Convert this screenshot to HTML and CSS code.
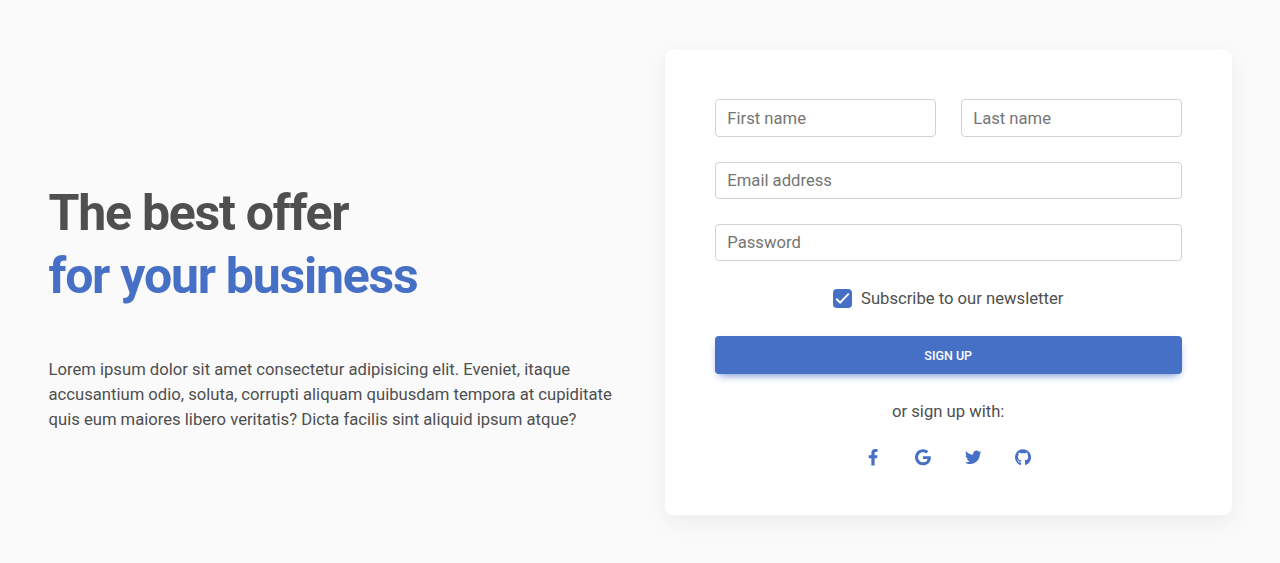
FILE: index.html
```html
<!DOCTYPE html>
<html lang="en">
<head>
<meta charset="utf-8">
<title>Sign up</title>
<link rel="stylesheet" href="styles.css">
</head>
<body>
<section class="hero">
  <div class="intro">
    <h1 class="title">The best offer<br><span class="accent">for your business</span></h1>
    <p class="lead">Lorem ipsum dolor sit amet consectetur adipisicing elit. Eveniet, itaque accusantium odio, soluta, corrupti aliquam quibusdam tempora at cupiditate quis eum maiores libero veritatis? Dicta facilis sint aliquid ipsum atque?</p>
  </div>
  <form class="card">
    <div class="row">
      <input class="field" type="text" placeholder="First name">
      <input class="field" type="text" placeholder="Last name">
    </div>
    <input class="field" type="email" placeholder="Email address">
    <input class="field" type="password" placeholder="Password">
    <label class="check">
      <span class="box"><svg viewBox="0 0 19 19"><path d="M3.3 9.8l3.8 3.8L15.8 4.6" fill="none" stroke="#fff" stroke-width="2"/></svg></span>
      <span>Subscribe to our newsletter</span>
    </label>
    <button class="submit" type="button">Sign up</button>
    <p class="or">or sign up with:</p>
    <div class="social">
      <a class="icon"><svg viewBox="0 0 320 512"><path d="M279.14 288l14.22-92.66h-88.91v-60.13c0-25.35 12.42-50.06 52.24-50.06h40.42V6.26S260.43 0 225.36 0c-73.22 0-121.08 44.38-121.08 124.72v70.62H22.89V288h81.39v224h100.17V288z"/></svg></a>
      <a class="icon"><svg viewBox="0 0 488 512"><path d="M488 261.8C488 403.3 391.1 504 248 504 110.8 504 0 393.2 0 256S110.8 8 248 8c66.8 0 123 24.5 166.3 64.9l-67.5 64.9C258.5 52.6 94.3 116.6 94.3 256c0 86.5 69.1 156.6 153.7 156.6 98.2 0 135-70.4 140.8-106.9H248v-85.3h236.1c2.3 12.7 3.9 24.9 3.9 41.4z"/></svg></a>
      <a class="icon"><svg viewBox="0 0 512 512"><path d="M459.37 151.716c.325 4.548.325 9.097.325 13.645 0 138.72-105.583 298.558-298.558 298.558-59.452 0-114.68-17.219-161.137-47.106 8.447.974 16.568 1.299 25.34 1.299 49.055 0 94.213-16.568 130.274-44.832-46.132-.975-84.792-31.188-98.112-72.772 6.498.974 12.995 1.624 19.818 1.624 9.421 0 18.843-1.3 27.614-3.573-48.081-9.747-84.143-51.98-84.143-102.985v-1.299c13.969 7.797 30.214 12.67 47.431 13.319-28.264-18.843-46.781-51.005-46.781-87.391 0-19.492 5.197-37.36 14.294-52.954 51.655 63.675 129.3 105.258 216.365 109.807-1.624-7.797-2.599-15.918-2.599-24.04 0-57.828 46.782-104.934 104.934-104.934 30.213 0 57.502 12.67 76.67 33.137 23.715-4.548 46.456-13.32 66.599-25.34-7.798 24.366-24.366 44.833-46.132 57.827 21.117-2.273 41.584-8.122 60.426-16.243-14.292 20.791-32.161 39.308-52.628 54.253z"/></svg></a>
      <a class="icon"><svg viewBox="0 0 496 512"><path d="M165.9 397.4c0 2-2.3 3.6-5.2 3.6-3.3.3-5.6-1.3-5.6-3.6 0-2 2.3-3.6 5.2-3.6 3-.3 5.6 1.3 5.6 3.6zm-31.1-4.5c-.7 2 1.3 4.3 4.3 4.9 2.6 1 5.6 0 6.2-2s-1.3-4.3-4.3-5.2c-2.6-.7-5.5.3-6.2 2.3zm44.2-1.7c-2.9.7-4.9 2.6-4.6 4.9.3 2 2.9 3.3 5.9 2.6 2.9-.7 4.9-2.6 4.6-4.6-.3-1.9-3-3.2-5.9-2.9zM244.8 8C106.1 8 0 113.3 0 252c0 110.9 69.8 205.8 169.5 239.2 12.8 2.3 17.3-5.6 17.3-12.1 0-6.2-.3-40.4-.3-61.4 0 0-70 15-84.7-29.8 0 0-11.4-29.1-27.8-36.6 0 0-22.9-15.7 1.6-15.4 0 0 24.9 2 38.6 25.8 21.9 38.6 58.6 27.5 72.9 20.9 2.3-16 8.8-27.1 16-33.7-55.9-6.2-112.3-14.3-112.3-110.5 0-27.5 7.6-41.3 23.6-58.9-2.6-6.5-11.1-33.3 2.6-67.9 20.9-6.5 69 27 69 27 20-5.6 41.5-8.5 62.8-8.5s42.8 2.9 62.8 8.5c0 0 48.1-33.6 69-27 13.7 34.7 5.2 61.4 2.6 67.9 16 17.7 25.8 31.5 25.8 58.9 0 96.5-58.9 104.2-114.8 110.5 9.2 7.9 17 22.9 17 46.4 0 33.7-.3 75.4-.3 83.6 0 6.5 4.6 14.4 17.3 12.1C428.2 457.8 496 362.9 496 252 496 113.3 383.5 8 244.8 8zM97.2 352.9c-1.3 1-1 3.3.7 5.2 1.6 1.6 3.9 2.3 5.2 1 1.3-1 1-3.3-.7-5.2-1.6-1.6-3.9-2.3-5.2-1zm-10.8-8.1c-.7 1.3.3 2.9 2.3 3.9 1.6 1 3.6.7 4.3-.7.7-1.3-.3-2.9-2.3-3.9-2-.6-3.6-.3-4.3.7zm32.4 35.6c-1.6 1.3-1 4.3 1.3 6.2 2.3 2.3 5.2 2.6 6.5 1 1.3-1.3.7-4.3-1.3-6.2-2.2-2.3-5.2-2.6-6.5-1zm-11.4-14.7c-1.6 1-1.6 3.6 0 5.9 1.6 2.3 4.3 3.3 5.6 2.3 1.6-1.3 1.6-3.9 0-6.2-1.4-2.3-4-3.3-5.6-2z"/></svg></a>
    </div>
  </form>
</section>
</body>
</html>
```
FILE: styles.css
```css
* { box-sizing: border-box; }
body { margin: 0; background: #fafafa; color: #4f4f4f; font: 400 16.65px/25px Roboto, "Liberation Sans", sans-serif; }
.hero { height: 563px; padding: 49.6px 48px 48px 48.5px; display: grid; grid-template-columns: 567px 566.8px; gap: 49.3px; align-items: center; }
.intro { padding-top: 50px; }
.title { margin: 0 0 50px; font-size: 50px; line-height: 62.4px; font-weight: 700; letter-spacing: -1.25px; }
.accent { color: #466fc6; }
.lead { margin: 0; }
.card { height: 465.6px; background: #fff; border-radius: 8px; padding: 49.8px 50px 49px 50px; box-shadow: 0 7px 22px rgba(0,0,0,.06); display: flex; flex-direction: column; }
.row { display: grid; grid-template-columns: 1fr 1fr; gap: 25px; }
.field { width: 100%; height: 37.3px; flex: none; margin: 0 0 24.9px; padding: 0 11.5px; border: 1px solid #d2d2d2; border-radius: 4px; background: #fff; font: inherit; }
.field::placeholder { color: #757575; opacity: 1; }
.check { display: flex; flex: none; justify-content: center; align-items: center; gap: 9px; height: 25px; margin-bottom: 25px; }
.box { width: 19px; height: 19px; border-radius: 4px; background: #466fc6; }
.box svg { display: block; }
.submit { height: 38px; flex: none; padding: 2px 0 0; border: 0; border-radius: 4px; background: #466fc6; color: #fff; font: 500 12.5px/19px Roboto, sans-serif; text-transform: uppercase; box-shadow: 0 4px 9px -4px #466fc6; }
.or { margin: 25px 0 21px; text-align: center; }
.social { display: flex; justify-content: center; }
.icon { width: 50px; height: 25px; display: flex; justify-content: center; align-items: center; }
.icon svg { height: 16.6px; fill: #466fc6; }
```
